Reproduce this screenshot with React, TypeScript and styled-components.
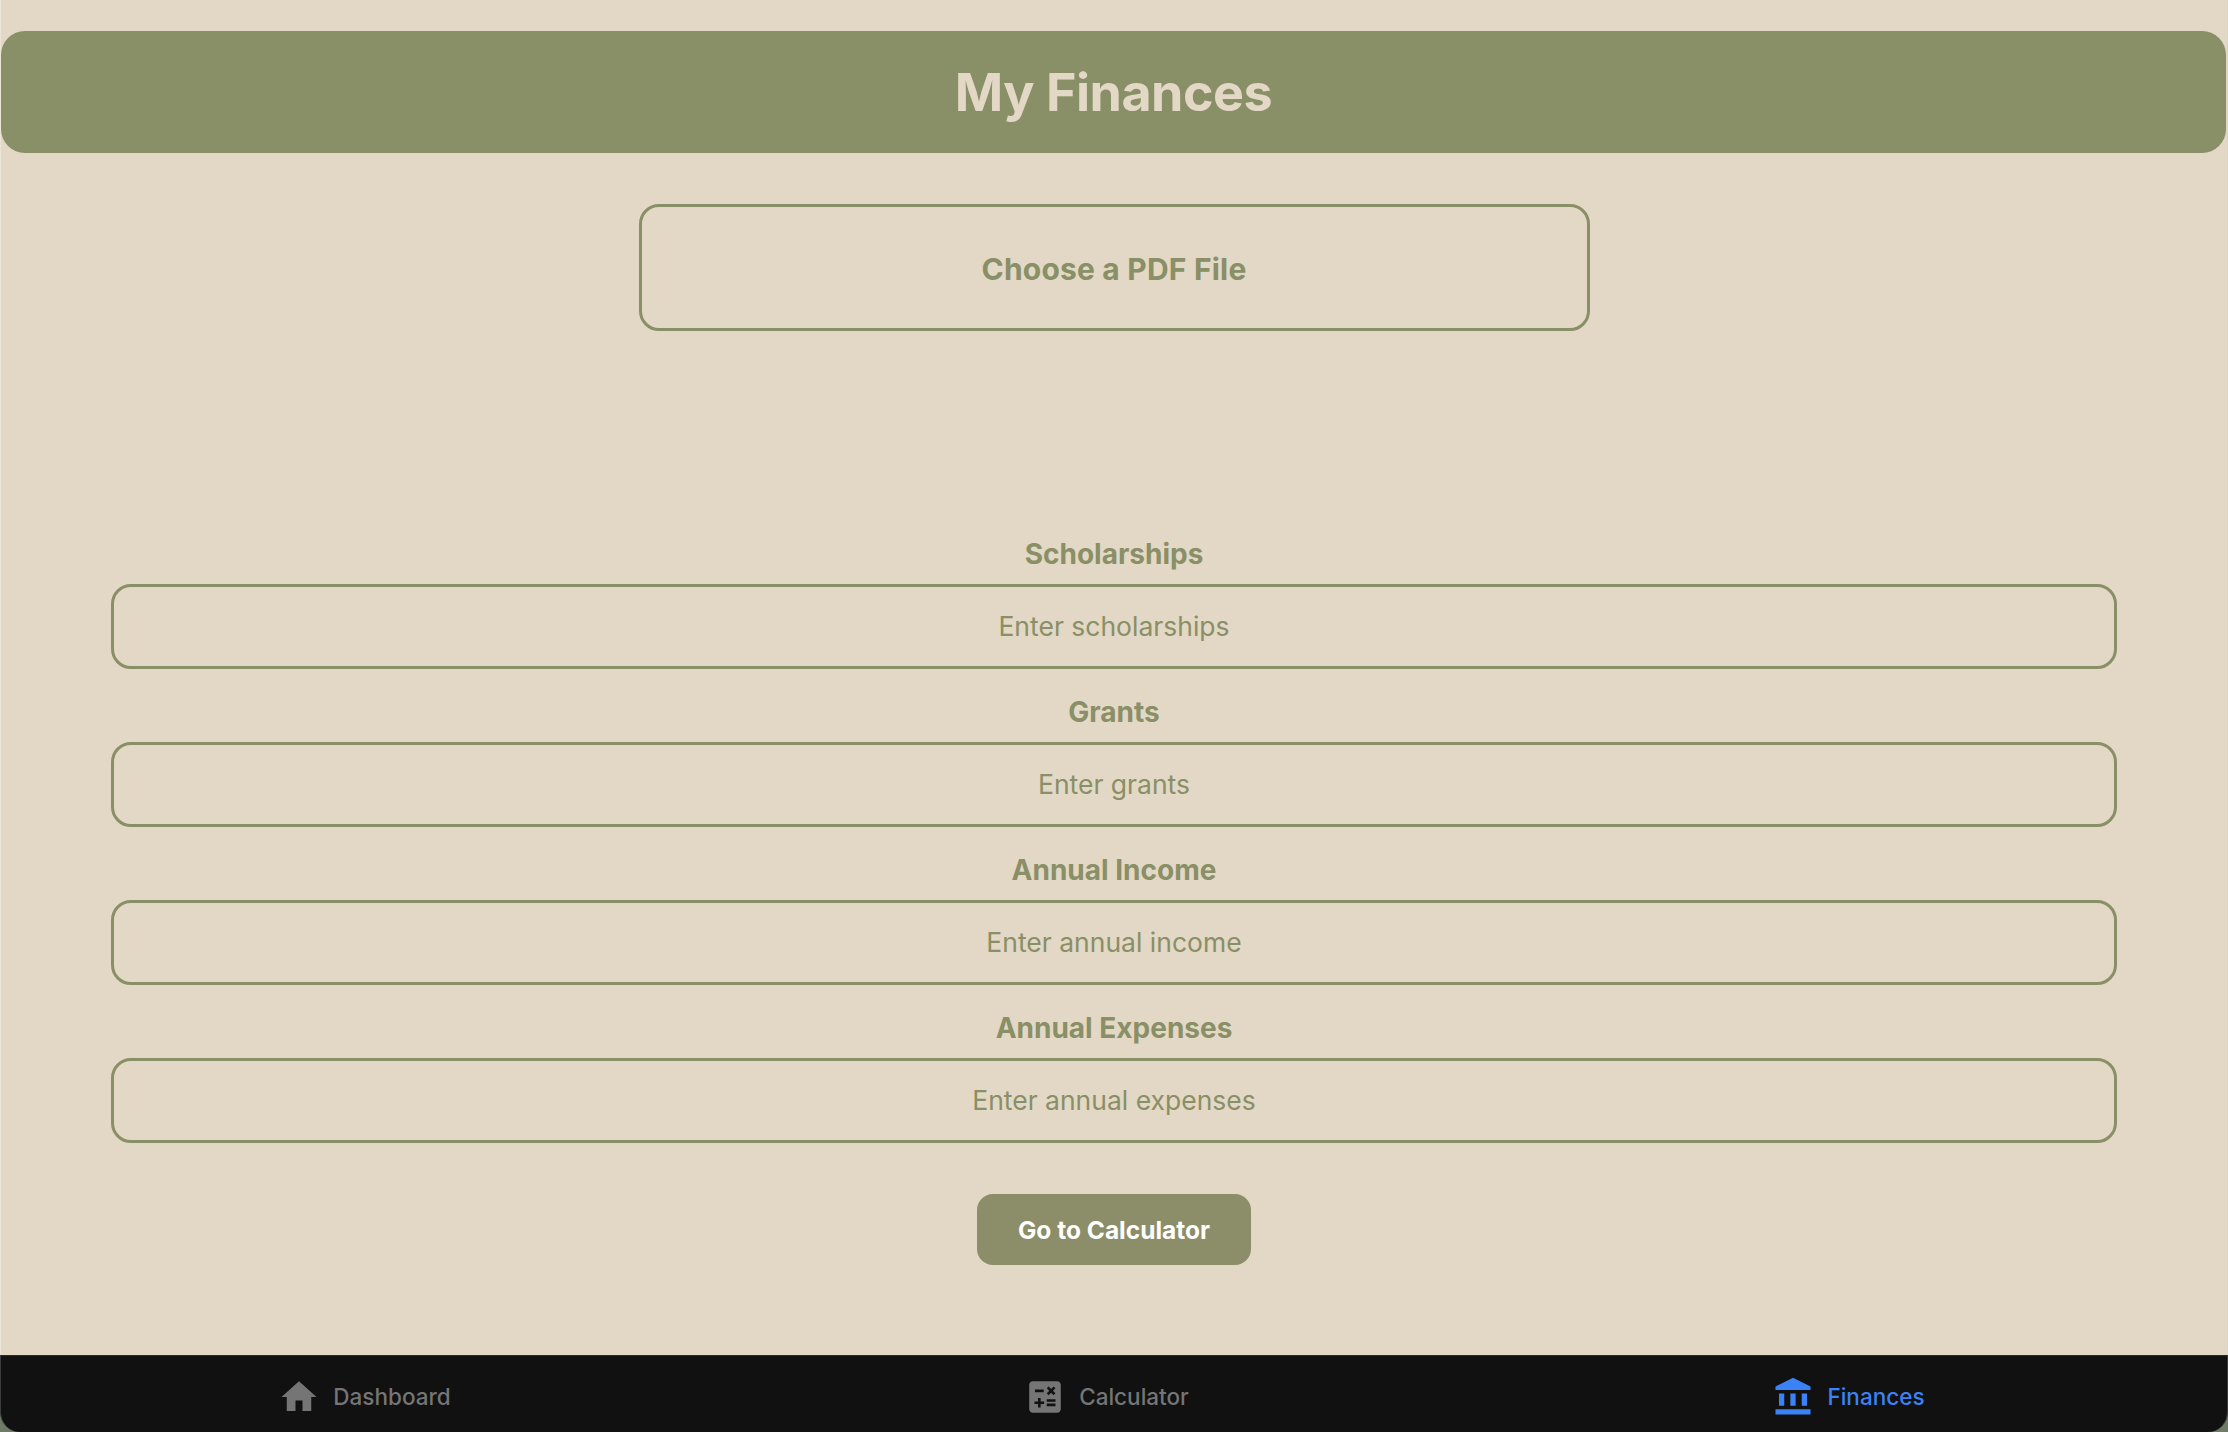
import styled, { createGlobalStyle } from 'styled-components'
import { MdAccountBalance, MdCalculate, MdHome } from 'react-icons/md'

const olive = '#898f66'
const sand = '#e3d8c5'

const GlobalStyle = createGlobalStyle`
	html, body {
		margin: 0;
		padding: 0;
		background: ${sand};
		font-family: Inter, 'Liberation Sans', sans-serif;
	}
`

const Page = styled.div`
	width: 2228px;
	height: 1432px;
	display: flex;
	flex-direction: column;
	overflow: hidden;
`

const Content = styled.main`
	flex: 1;
	display: flex;
	flex-direction: column;
	align-items: center;
	padding-top: 31px;
	border-left: 1px solid #ebe4d8;
	border-right: 1px solid #ddd3c2;
`

const Header = styled.header`
	align-self: stretch;
	height: 122px;
	margin-right: 1px;
	display: flex;
	align-items: center;
	justify-content: center;
	background: ${olive};
	border-radius: 24px;
`

const Title = styled.h1`
	margin: 0;
	font-size: 52px;
	font-weight: 700;
	letter-spacing: -0.5px;
	color: ${sand};
`

const PickButton = styled.button`
	width: 951px;
	height: 127px;
	margin-top: 51px;
	padding: 2px 0 0;
	box-sizing: border-box;
	border: 3px solid ${olive};
	border-radius: 20px;
	background: transparent;
	font-family: inherit;
	font-size: 30px;
	font-weight: 700;
	letter-spacing: 0.2px;
	color: ${olive};
`

const Form = styled.form`
	align-self: stretch;
	display: flex;
	flex-direction: column;
	align-items: center;
	padding: 0 110px;
	margin-top: 206px;
`

const FieldLabel = styled.label`
	height: 34px;
	line-height: 34px;
	font-size: 28px;
	font-weight: 700;
	color: ${olive};
`

const Field = styled.div`
	align-self: stretch;
	display: flex;
	flex-direction: column;
	align-items: center;
	gap: 13px;
	margin-bottom: 26px;
	&:last-child {
		margin-bottom: 0;
	}
`

const FieldInput = styled.input`
	align-self: stretch;
	height: 85px;
	padding: 0 0 2px;
	box-sizing: border-box;
	border: 3px solid ${olive};
	border-radius: 20px;
	background: transparent;
	outline: none;
	text-align: center;
	font-family: inherit;
	font-size: 26.5px;
	color: ${olive};
	&::placeholder {
		color: ${olive};
		opacity: 1;
	}
`

const SubmitButton = styled.button`
	width: 274px;
	height: 71px;
	margin-top: 51px;
	padding: 0;
	border: none;
	border-radius: 16px;
	background: #8b8e69;
	font-family: inherit;
	font-size: 24.5px;
	font-weight: 700;
	color: #fff;
`

// the window's rounded corner shows behind the tab bar
const TabDock = styled.div`
	background: #6f7b66;
`

const TabBar = styled.nav`
	height: 77px;
	box-sizing: border-box;
	display: grid;
	grid-template-columns: repeat(3, 1fr);
	background: #111111;
	border-top: 1px solid #2c2826;
	border-left: 1px solid #3d3d3d;
	border-right: 1px solid #3d3d3d;
	border-radius: 0 0 20px 20px;
`

const Tab = styled.a<{ $active?: boolean }>`
	display: flex;
	align-items: center;
	justify-content: center;
	gap: 13px;
	padding: 5px 15px 0 0;
	font-size: 22.5px;
	font-weight: 500;
	color: ${props => (props.$active ? '#3b82f6' : '#757575')};
`

const fields = [
	{ label: 'Scholarships', placeholder: 'Enter scholarships' },
	{ label: 'Grants', placeholder: 'Enter grants' },
	{ label: 'Annual Income', placeholder: 'Enter annual income' },
	{ label: 'Annual Expenses', placeholder: 'Enter annual expenses' },
]

export default function App() {
	return (
		<>
			<GlobalStyle />
			<Page>
				<Content>
					<Header>
						<Title>My Finances</Title>
					</Header>
					<PickButton type="button">Choose a PDF File</PickButton>
					<Form>
						{fields.map(field => (
							<Field key={field.label}>
								<FieldLabel>{field.label}</FieldLabel>
								<FieldInput placeholder={field.placeholder} />
							</Field>
						))}
					</Form>
					<SubmitButton type="button">Go to Calculator</SubmitButton>
				</Content>
				<TabDock>
					<TabBar>
						<Tab>
							<MdHome size={42} />
							Dashboard
						</Tab>
						<Tab>
							<MdCalculate size={42} />
							Calculator
						</Tab>
						<Tab $active>
							<MdAccountBalance size={42} />
							Finances
						</Tab>
					</TabBar>
				</TabDock>
			</Page>
		</>
	)
}
